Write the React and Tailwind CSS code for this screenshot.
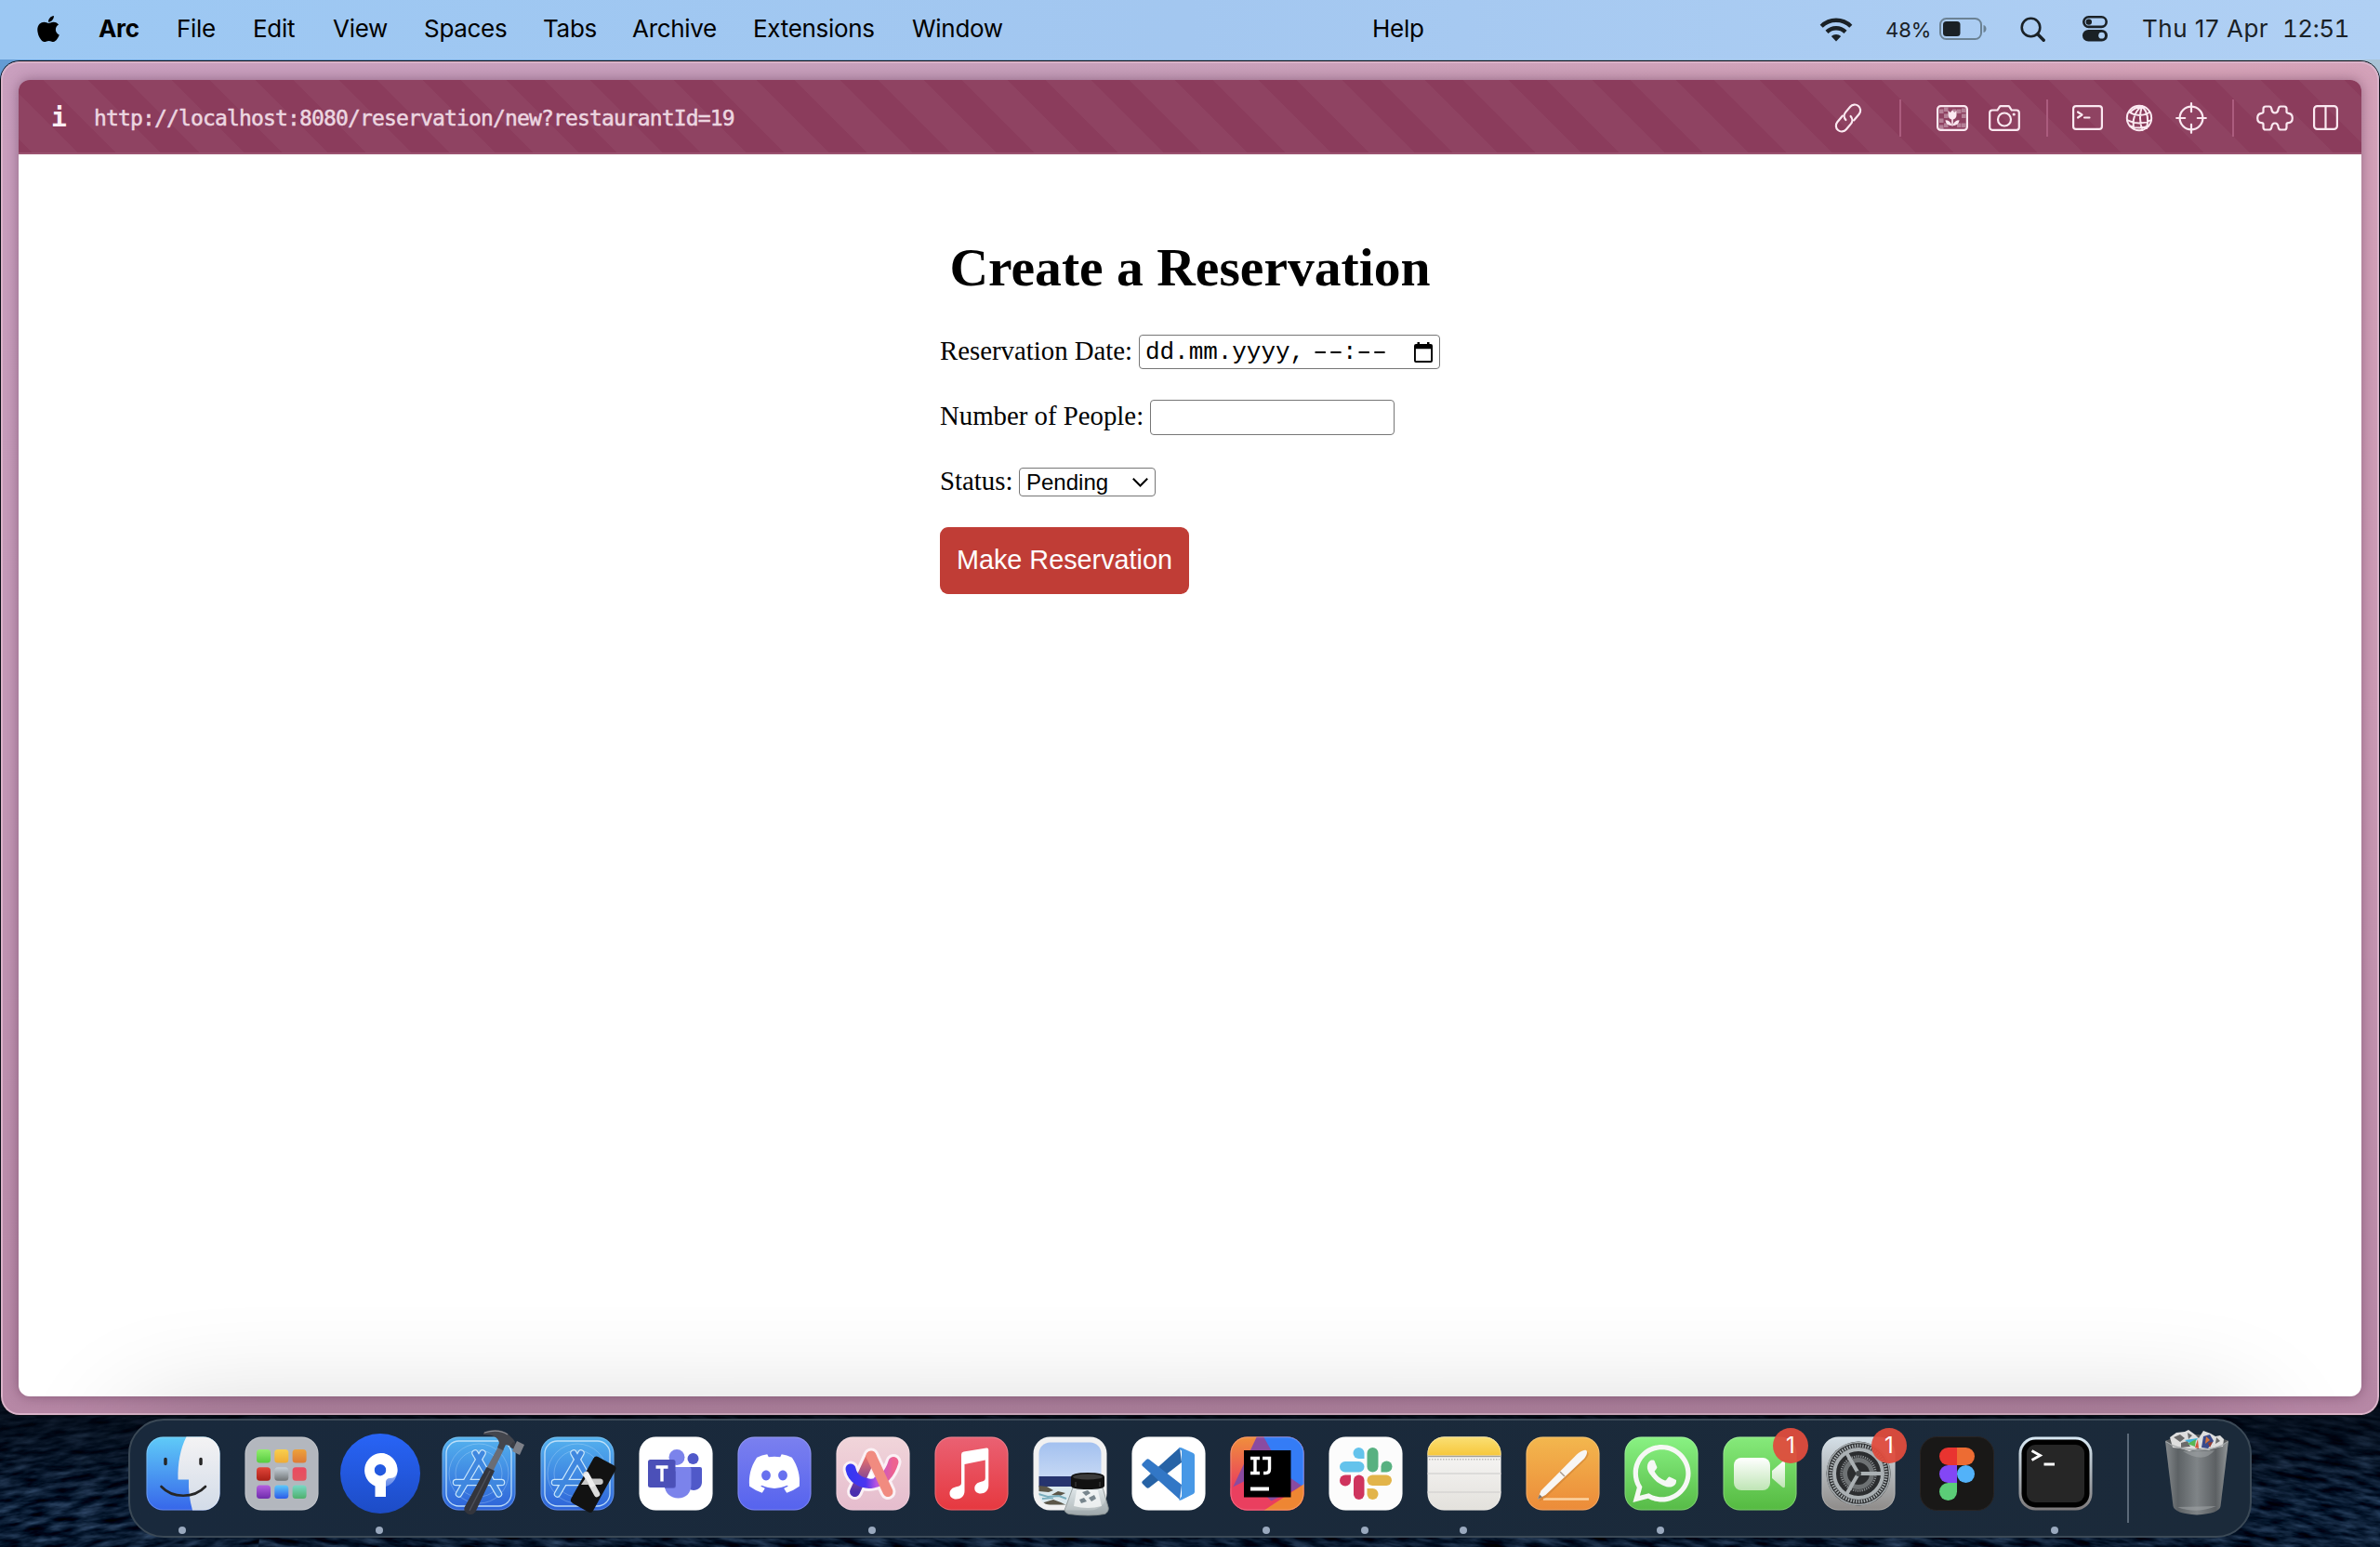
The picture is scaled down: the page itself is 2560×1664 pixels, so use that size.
import React from 'react';
import { FaApple, FaDiscord, FaWhatsapp } from 'react-icons/fa6';

const MENU = [
  ['Arc', 'w-[84px] font-bold'],
  ['File', 'w-[82px]'],
  ['Edit', 'w-[86px]'],
  ['View', 'w-[98px]'],
  ['Spaces', 'w-[128px]'],
  ['Tabs', 'w-[96px]'],
  ['Archive', 'w-[130px]'],
  ['Extensions', 'w-[171px]'],
  ['Window', 'w-[495px]'],
  ['Help', 'w-[100px]'],
];

function MenuBar() {
  return (
    <header className="flex h-16 shrink-0 items-center bg-linear-to-r from-[#9cc8f3] via-[#a3c7f0] to-[#b0d0f4] pb-0.5 text-[26px] leading-8 text-black">
      <FaApple className="ml-[36px] mr-[38px] h-[32px] w-[32px] shrink-0" />
      {MENU.map(([label, cls]) => (
        <span key={label} className={`shrink-0 whitespace-nowrap tracking-[-0.3px] ${cls}`}>{label}</span>
      ))}
      <div className="ml-auto flex items-center text-[#1a2126]">
        <svg className="h-[27px] w-[36px]" viewBox="0 0 36 27" fill="none" stroke="currentColor" strokeWidth="4.4">
          <path d="M2.2 10.2a22.5 22.5 0 0 1 31.6 0" />
          <path d="M8 16.4a14.3 14.3 0 0 1 20 0" />
          <path d="M18 26.5l-5.2-5.4a7.4 7.4 0 0 1 10.4 0z" fill="currentColor" stroke="none" />
        </svg>
        <span className="ml-[35px] w-[58px] whitespace-nowrap pt-0.5 text-[22px]">48%</span>
        <svg className="h-[24px] w-[52px]" viewBox="0 0 52 24">
          <rect x="1" y="1" width="44" height="22" rx="6.5" fill="none" stroke="#6b8294" strokeWidth="2" />
          <rect x="4" y="4" width="18.5" height="16" rx="3.5" fill="currentColor" />
          <path d="M47.5 8c4 1 4 7 0 8z" fill="#6b8294" />
        </svg>
        <svg className="ml-[35px] h-[27px] w-[28px]" viewBox="0 0 28 27" fill="none" stroke="currentColor" strokeLinecap="round">
          <circle cx="11.5" cy="11.5" r="9.8" strokeWidth="2.6" />
          <path d="M18.8 18.8l6.4 6.4" strokeWidth="3.4" />
        </svg>
        <svg className="ml-[39px] h-[28px] w-[28px]" viewBox="0 0 28 28">
          <rect x="1.3" y="1.3" width="24.4" height="10.6" rx="5.3" fill="none" stroke="currentColor" strokeWidth="2.6" />
          <circle cx="6.8" cy="6.6" r="3.2" fill="currentColor" />
          <rect x="0" y="15" width="27" height="12.5" rx="6.25" fill="currentColor" />
          <circle cx="20.6" cy="21.2" r="3.4" fill="#afcff2" />
        </svg>
        <span className="ml-[36px] w-[151px] whitespace-nowrap tracking-[0.5px]">Thu 17 Apr</span>
        <span className="w-[105px] whitespace-nowrap tabular-nums tracking-[-0.5px]">12:51</span>
      </div>
    </header>
  );
}

function Icon({ className, w, h, children }) {
  return (
    <svg className={className} viewBox={`0 0 ${w} ${h}`} width={w} height={h} fill="none" stroke="#fbe9f1" strokeWidth="2.2" strokeLinecap="round" strokeLinejoin="round">
      {children}
    </svg>
  );
}

function Divider({ className }) {
  return <div className={`h-10 w-0.5 shrink-0 bg-[#ab5c7e] ${className}`} />;
}

const CHECKS = [[3, 3], [3, 13], [8, 8], [8, 18], [22, 3], [27, 8], [22, 18], [27, 18], [3, 20], [17, 3], [27, 2], [8, 1]];

function UrlBar() {
  return (
    <div className="flex h-20 shrink-0 items-center border-b-2 border-[#9b5370] bg-[repeating-linear-gradient(45deg,#8b3c5c_0px,#8b3c5c_11.5px,#8f4362_11.5px,#8f4362_46px,#8b3c5c_46px,#8b3c5c_63.55px)] bg-origin-border pt-[3px]">
      <span className="ml-[35px] w-[46px] font-['DejaVu_Sans_Mono',monospace] text-[28px] font-bold leading-8 text-[#fdeef4]">i</span>
      <span className="whitespace-nowrap font-['DejaVu_Sans_Mono',monospace] text-[23px] leading-8 tracking-[-0.85px] text-[#ecd6e0] [-webkit-text-stroke:0.5px_#ecd6e0]">http://localhost:8080/reservation/new?restaurantId=19</span>
      <div className="ml-auto flex items-center">
        <Icon w={32} h={32}>
          <g transform="rotate(-50 16 16)">
            <path d="M15 9.800H6.200a6.200 6.200 0 0 0 0 12.400h8a6.200 6.200 0 0 0 6-5.500" transform="translate(-1 0)" />
            <path d="M17 22.200h8.800a6.200 6.200 0 0 0 0-12.400h-8a6.200 6.200 0 0 0-6 5.500" transform="translate(1 0)" />
          </g>
        </Icon>
        <Divider className="ml-[39px]" />
        <Icon className="ml-[38px]" w={34} h={28}>
          {CHECKS.map(([x, y]) => (
            <rect key={`${x}-${y}`} x={x} y={y + 1.5} width="4.500" height="4.500" fill="#b58197" stroke="none" />
          ))}
          <rect x="1.100" y="1.100" width="31.800" height="25.800" rx="3.500" />
          <path d="M12.500 6l2.300 2L17 5.500 19.200 8l2.300-2v5a4.500 4.500 0 0 1-9 0zM16.200 22C12 22 9.800 19.500 9.500 16.200c3.500 0 6 2 6.700 5zM17.800 22c4.200 0 6.400-2.500 6.700-5.800-3.500 0-6 2-6.700 5z" fill="#fbe9f1" stroke="none" />
          <path d="M17 14v8" strokeWidth="1.600" />
        </Icon>
        <Icon className="ml-[22px]" w={34} h={28}>
          <path d="M4 5.500h5.500l2.300-3.600a1.500 1.500 0 0 1 1.300-.7h8a1.500 1.500 0 0 1 1.300.7l2.300 3.600H30a2.800 2.800 0 0 1 2.800 2.800V24a2.800 2.800 0 0 1-2.800 2.800H4A2.800 2.800 0 0 1 1.200 24V8.300A2.800 2.800 0 0 1 4 5.500z" />
          <circle cx="17" cy="15.500" r="7" />
          <circle cx="27.200" cy="10" r="1.600" fill="#fbe9f1" stroke="none" />
        </Icon>
        <Divider className="ml-[28px]" />
        <Icon className="ml-[26px]" w={33} h={27}>
          <rect x="1.100" y="1.100" width="30.800" height="24.800" rx="3" />
          <path d="M6 7.500l4.500 3L6 13.500M13 13.500h5.500" />
        </Icon>
        <Icon className="ml-[24px]" w={30} h={30}>
          <g strokeWidth="2">
            <circle cx="15" cy="15" r="13.200" />
            <path d="M18 2C10 8 7 18 9.500 27M18 2c-2.500 8-3 17 .5 26M18 2c5.500 6 7.500 15 5 24M4 8.500c7 4.500 16 4.500 22.500 0M2 17c8 4.500 18 4.500 26 0M5 23.500c5 2.500 14 3 20 0M18 2c-5 1-9 3-12 6" />
          </g>
        </Icon>
        <Icon className="ml-[24px]" w={34} h={34}>
          <circle cx="17" cy="17" r="12.400" />
          <path d="M17 1.200v9M17 23.800v9M1.200 17h9M23.800 17h9" />
        </Icon>
        <Divider className="ml-[27px]" />
        <Icon className="ml-[24px]" w={40} h={28}>
          <path d="M10 1.500h4c1.500 0 2 1 2.300 2.500.4 3 1.500 4.500 3.700 4.500s3.300-1.500 3.700-4.500C24 2.500 24.500 1.500 26 1.500h4c1.800 0 2.500 1.200 2.500 2.600v3.200c0 1 .8 1.400 2 1.500 3 .3 4.300 2.400 4.300 5.200s-1.300 4.900-4.300 5.200c-1.200.1-2 .5-2 1.500v3.200c0 1.400-.7 2.600-2.500 2.600h-4c-1.500 0-2-1-2.300-2.500-.4-3-1.500-4.500-3.700-4.500s-3.300 1.500-3.700 4.500c-.3 1.500-.8 2.500-2.300 2.500h-4c-1.800 0-2.500-1.200-2.500-2.600v-3.200c0-1-.8-1.400-2-1.500-3-.3-4.300-2.400-4.300-5.200s1.300-4.900 4.300-5.200c1.200-.1 2-.5 2-1.500V4.100c0-1.400.7-2.600 2.500-2.600z" />
        </Icon>
        <Icon className="ml-[21px] mr-[25px]" w={27} h={27}>
          <rect x="1.100" y="1.100" width="24.800" height="24.800" rx="3.500" />
          <path d="M13.500 1.500v24" />
        </Icon>
      </div>
    </div>
  );
}

function Dashes({ className }) {
  return <span className={`inline-block w-[0.8em] scale-x-[1.6] tracking-[-0.2em] ${className}`}>--</span>;
}

function ReservationForm() {
  return (
    <main className="flex flex-1 justify-center bg-white pt-[89px] font-['Liberation_Serif',serif] text-[28.8px] text-black">
      <div className="flex w-[540px] flex-col items-start pl-px">
        <h1 className="mr-px self-center whitespace-nowrap text-[57.6px] font-bold leading-[66px]">Create a Reservation</h1>
        <div className="mt-[39px] flex h-[37px] w-full items-center whitespace-nowrap">
          <label className="pb-px">Reservation Date:</label>
          <div className="ml-auto mr-px flex h-[37px] w-[324px] items-center rounded-[4px] border border-[#767676] pl-[6px] pr-[7px] font-['Liberation_Mono',monospace] text-[26px] leading-8 tracking-[-0.05px]">
            <span className="whitespace-nowrap pt-px">dd.mm.yyyy,</span>
            <span className="ml-[0.43em] whitespace-nowrap pt-px"><Dashes className="mr-[0.34em]" />:<Dashes className="ml-[0.065em]" /></span>
            <svg className="ml-auto h-[22px] w-[20px]" viewBox="0 0 20 22">
              <path fill="#000" fillRule="evenodd" d="M3.500 0h2.500v2h8V0h2.500v2H18a2 2 0 0 1 2 2v16a2 2 0 0 1-2 2H2a2 2 0 0 1-2-2V4a2 2 0 0 1 2-2h1.500zM1.900 7.200v12.900h16.200V7.200z" />
            </svg>
          </div>
        </div>
        <div className="mt-[33px] flex h-[38px] items-center whitespace-nowrap">
          <label className="w-[226px] pb-[3px]">Number of People:</label>
          <input className="h-[38px] w-[263px] rounded-[4px] border border-[#767676] bg-white" />
        </div>
        <div className="mt-[35px] flex h-[31px] items-center whitespace-nowrap">
          <label className="w-[85px] pb-px">Status:</label>
          <div className="flex h-[31px] w-[147px] items-center justify-between rounded-[4px] border border-[#767676] pl-[7px] pr-[7px] font-['Liberation_Sans',sans-serif] text-[24px] leading-7">
            <span>Pending</span>
            <svg className="h-[10px] w-[17px]" viewBox="0 0 17 10" fill="none" stroke="#000" strokeWidth="2">
              <path d="M.8.800l7.700 7.700L16.200.800" />
            </svg>
          </div>
        </div>
        <button className="mt-[33px] flex h-[72px] w-[268px] items-center justify-center whitespace-nowrap rounded-[9px] bg-[#c03d36] pb-px font-['Liberation_Sans',sans-serif] text-[28.8px] text-white">Make Reservation</button>
      </div>
    </main>
  );
}

function Tile({ fill, children }) {
  return (
    <>
      <rect x="0.500" y="0.500" width="79" height="79" rx="18" fill={fill} />
      {children}
      <rect x="1" y="1" width="78" height="78" rx="17.500" fill="none" stroke="#fff" strokeOpacity=".22" />
    </>
  );
}

function Grad({ id, from, to, x2 = 0, y2 = 1 }) {
  return (
    <linearGradient id={id} x1="0" y1="0" x2={x2} y2={y2}>
      <stop offset="0" stopColor={from} />
      <stop offset="1" stopColor={to} />
    </linearGradient>
  );
}

const PADS = [
  ['#93ee6e', '#56cc40'], ['#f8cf4e', '#efab35'], ['#eda23b', '#dd7a35'],
  ['#e2463a', '#a91f16'], ['#c8d2da', '#707476'], ['#ea4a60', '#e35660'],
  ['#b35fe0', '#6e2cab'], ['#5cc8fa', '#2c5ae8'], ['#78d8c4', '#4fb06c'],
];

function Finder() {
  return (
    <Tile fill="url(#finderBlue)">
      <Grad id="finderBlue" from="#5fcbf8" to="#3666ea" />
      <Grad id="finderWhite" from="#f4f3f4" to="#d2dbe8" />
      <path d="M43.500.500H61.500a18 18 0 0 1 18 18V61.500a18 18 0 0 1-18 18H50c-3-11-4.500-22-4-33H34.500C34 29 37 13 43.500.500z" fill="url(#finderWhite)" />
      <g fill="none" stroke="#262626" strokeLinecap="round">
        <path d="M21 24.500v5M59 24.500v5" strokeWidth="3.500" />
        <path d="M16.500 54c12 13 35 13 47.500 0" strokeWidth="2.600" />
      </g>
    </Tile>
  );
}

function Launchpad() {
  return (
    <Tile fill="#b3b7be">
      {PADS.map(([a, b], i) => (
        <g key={a}>
          <Grad id={`pad${i}`} from={a} to={b} />
          <rect x={13 + (i % 3) * 19.300} y={14 + Math.floor(i / 3) * 19.300} width="15" height="14.500" rx="3.500" fill={`url(#pad${i})`} />
        </g>
      ))}
    </Tile>
  );
}

function Sourcetree() {
  return (
    <>
      <Grad id="src" from="#2864f6" to="#1d4cc6" />
      <Grad id="srcTail" from="#ffffff" to="#5f86e8" />
      <circle cx="40" cy="40" r="43" fill="url(#src)" />
      <path d="M40 18a18.500 18.500 0 0 1 6 36V41a7 7 0 1 0-6-16z" fill="url(#srcTail)" />
      <path fillRule="evenodd" d="M40 18c10.500 0 18.500 8 18.500 18 0 6-3 9-8 9-3 0-4.500 2-4.500 4v16H34.500V53.500A18.500 18.500 0 0 1 40 18zm0 12a6.200 6.200 0 1 0 0 12.400A6.200 6.200 0 0 0 40 30z" fill="#fff" />
    </>
  );
}

function Blueprint() {
  return (
    <Tile fill="url(#xcode)">
      <Grad id="xcode" from="#54b2ee" to="#2d62d8" />
      <g fill="none" stroke="#c9e6fb">
        <rect x="5" y="5" width="70" height="70" rx="13.500" strokeOpacity=".9" strokeWidth="1.300" />
        <circle cx="40" cy="40" r="32" strokeOpacity=".3" />
        <circle cx="40" cy="40" r="25" strokeOpacity=".3" />
        <path d="M44 18L18.500 62" strokeWidth="7.500" strokeLinecap="round" />
        <path d="M36 18l25.500 44" strokeWidth="7.500" strokeLinecap="round" />
        <path d="M15.500 49.500h49" strokeWidth="7.500" strokeLinecap="round" />
        <path d="M44 18L18.500 62M36 18l25.500 44M15.500 49.500h49" stroke="#3f87df" strokeWidth="5.200" strokeLinecap="round" />
      </g>
    </Tile>
  );
}

function Xcode() {
  return (
    <>
      <Blueprint />
      <path d="M61 11l6 3-12 24-7-3z" fill="#6a6d75" />
      <path d="M48.500 33l8.500 4-20 43c-1.500 4-6.500 5-9.500 3s-4-4-2.500-7.500z" fill="#33353c" />
      <path d="M52 37L30 80" stroke="#4c4f58" strokeWidth="1.500" />
      <path d="M45-4c8-4 19-4 26 1l6 6 2 3-2 5-8-2-3 6-6-3 2-5c-1-6-7-9-17-9z" fill="#44464d" />
      <path d="M77 6l5 3-3 6-6-4z" fill="#3b3d44" />
      <path d="M81 5l8 4-5 11-8-4z" fill="#7d8088" />
      <path d="M46-4c10-3 19-2 25 2" stroke="#888b93" strokeWidth="1.200" fill="none" />
    </>
  );
}

function Simulator() {
  return (
    <>
      <Blueprint />
      <g transform="rotate(29 57 51)">
        <rect x="44" y="23" width="27" height="57" rx="4" fill="#121212" />
      </g>
      <path d="M49.500 41L61 62" stroke="#dcdcdc" strokeWidth="6.500" strokeLinecap="round" />
      <path d="M44 52l4.500-6.500H65a3.300 3.300 0 0 1 0 6.500z" fill="#c9c9c9" />
      <path d="M49 40l8 14" stroke="#efefef" strokeWidth="5.500" />
    </>
  );
}

function Teams() {
  return (
    <Tile fill="#fff">
      <circle cx="58.500" cy="24" r="6" fill="#5059c9" />
      <path d="M52 33h14a2 2 0 0 1 2 2V49c0 5.500-4 9-9 9-4 0-7-3-7-7z" fill="#5059c9" />
      <circle cx="41" cy="22.500" r="8.500" fill="#7b83eb" />
      <path d="M30 33h24.500a2 2 0 0 1 2 2V52c0 9-6 14.500-14 14.500S28 61 28 53z" fill="#7b83eb" />
      <path d="M40 33V53a3 3 0 0 1-3 3h-9v-6l12-13z" fill="#4b53bc" opacity=".6" />
      <rect x="10" y="25" width="29.500" height="30" rx="2.500" fill="#4b50b8" />
      <path d="M18.500 33h13M25 33v15.500" stroke="#fff" strokeWidth="3.400" />
    </Tile>
  );
}

function Discord() {
  return (
    <Tile fill="url(#discord)">
      <Grad id="discord" from="#7b80ef" to="#5663ee" />
      <FaDiscord x="10.500" y="10.500" size={59} color="#fff" />
    </Tile>
  );
}

function Arc() {
  const outline = 'M20.500 59.500L38 21 56 59.500';
  const sweep = 'M16 35C18 46 29 52 40 50S58 41 62 27.500';
  return (
    <Tile fill="url(#arcBg)">
      <Grad id="arcBg" from="#f1d5da" to="#e5bccd" />
      <linearGradient id="arcSweep" x1="0" x2="1" y1="0" y2="0">
        <stop offset="0" stopColor="#3737f2" />
        <stop offset=".35" stopColor="#4a35f0" />
        <stop offset=".6" stopColor="#b854e0" />
        <stop offset="1" stopColor="#ee628f" />
      </linearGradient>
      <Grad id="arcLeft" from="#ee7468" to="#4a2fae" />
      <g fill="none" strokeLinecap="round" strokeLinejoin="round">
        <path d={outline} stroke="#fbf1f5" strokeWidth="17" />
        <path d={sweep} stroke="#fbf1f5" strokeWidth="17" />
        <path d="M20.500 59.500L38 21.500" stroke="url(#arcLeft)" strokeWidth="11" />
        <path d={sweep} stroke="url(#arcSweep)" strokeWidth="11" />
        <path d="M38 21L56 59.500" stroke="#f18b80" strokeWidth="11" />
      </g>
      <path d="M38 37.500l-4 7.500c2.500 1 5 1 7.500 0z" fill="#fff" />
    </Tile>
  );
}

function Music() {
  return (
    <Tile fill="url(#music)">
      <Grad id="music" from="#ea6173" to="#e6383f" />
      <path d="M29 19.500q0-2.500 2.500-3L56 12.500q2.300-.4 2.300 2V53c0 5-4 8.500-8.500 8.500-4 0-6.500-2.500-6.500-5.500 0-4 3-6.500 7-7.300 3-.6 4.500-1.200 4.500-3.700V25.500L32.500 30v29c0 5-4 8.500-9 8.500-4 0-7-2.500-7-6 0-4 3-6.500 7-7.300 3-.6 5.500-1 5.500-4.200z" fill="#fff" />
    </Tile>
  );
}

function Preview() {
  return (
    <>
      <Grad id="sky" from="#9dbdef" to="#c6d8f4" />
      <Grad id="glass" from="#dfe6e8" to="#a9b2b4" />
      <rect x="0.500" y="0.500" width="79" height="79" rx="18" fill="#f1f1f1" />
      <clipPath id="photo"><rect x="6.500" y="6.500" width="67" height="67" rx="12" /></clipPath>
      <g clipPath="url(#photo)">
        <path d="M0 0h80v44H0z" fill="url(#sky)" />
        <path d="M0 43h80v12H0z" fill="#26346e" />
        <path d="M0 54h80v26H0z" fill="#dbe9ee" />
        <path d="M6 53l9 1 7 4-5 2-11-1zM12 71l10-3 8 3 6 3H8zM20 63l9 1 6-3-8-2z" fill="#5b5648" />
        <path d="M6 62l10 3 12-1 8 3M10 67l12-1" stroke="#79aebd" strokeWidth="2" fill="none" />
      </g>
      <path d="M43 54h32l6 28c1 4-1 9-4 10q-16 4-38 0c-4-1-6-5-4-9z" fill="url(#glass)" fillOpacity=".92" stroke="#8c9393" transform="matrix(1 0 0 .75 0 14.500)" />
      <path d="M47 58h23l4 17q-15 4-30 0z" fill="#f3f6f6" fillOpacity=".85" />
      <path d="M53 60l6-2 3 3-5 3zM60 66l6-3 2 4-5 3zM50 68l5-2 3 4-6 2z" fill="#78868d" />
      <path d="M41 44q0-5 18-5t18 5v9q0 4-18 4t-18-4z" fill="#111" />
      <ellipse cx="59" cy="43.500" rx="16" ry="3" fill="#3b3b3b" />
      <path d="M46 49v5M72 49v5" stroke="#444" />
    </>
  );
}

function VSCode() {
  return (
    <Tile fill="#fff">
      <path d="M52 12L12 48c-1 1-1 2 0 3l4 4c1 1 2 1 3 .300L54 28z" fill="#2763a6" />
      <path d="M52 68L12 32c-1-1-1-2 0-3l4-4c1-1 2-1 3-.300L54 52z" fill="#3277c6" />
      <path d="M51 68.500q2 .5 3.500-.5l12-6q1.500-.800 1.500-2.500v-39q0-1.700-1.500-2.500l-12-5.500q-2-1-4 .5l3.500 2.500v49z" fill="#4798e6" />
    </Tile>
  );
}

function IntelliJ() {
  return (
    <Tile fill="#e8425f">
      <Grad id="ijA" from="#f0903c" to="#ea3d5d" y2={0.700} />
      <clipPath id="ijClip"><rect x="0.500" y="0.500" width="79" height="79" rx="18" /></clipPath>
      <g clipPath="url(#ijClip)">
        <path d="M0 0h80v80H0z" fill="url(#ijA)" />
        <path d="M29 0L3 55l40 15 37-17V0z" fill="#8a4ba0" />
        <path d="M36 0h44v55L58 40z" fill="#347cf6" />
        <path d="M0 56l20-10 26 25-10 9H0z" fill="#ea3f5f" />
        <path d="M80 51L36 80h44z" fill="#ee8633" />
      </g>
      <rect x="15" y="15" width="50.500" height="50.500" fill="#000" />
      <path d="M22 23.500h10M27 23.500v16M22 39.500h10M35 23.500h7.500V35q0 4.500-4 4.500H36" stroke="#fff" strokeWidth="3.400" fill="none" />
      <rect x="22" y="54.500" width="20" height="4" fill="#fff" />
    </Tile>
  );
}

function Slack() {
  return (
    <Tile fill="#fcfcfc">
      <rect x="12" y="27" width="26.500" height="11.500" rx="5.750" fill="#64c3ec" />
      <path d="M38.500 24h-6A6 6 0 1 1 38.500 18z" fill="#64c3ec" />
      <rect x="41.500" y="12" width="12" height="26.500" rx="6" fill="#58b181" />
      <path d="M56.500 38.500v-6a6 6 0 1 1 6 6z" fill="#58b181" />
      <rect x="41.500" y="41.500" width="26.500" height="11.500" rx="5.750" fill="#e2b44a" />
      <path d="M41.500 56h6a6 6 0 1 1-6 6z" fill="#e2b44a" />
      <rect x="27" y="41.500" width="11.500" height="26.500" rx="5.750" fill="#cf345e" />
      <path d="M24 41.500v6a6 6 0 1 1-6-6z" fill="#cf345e" />
    </Tile>
  );
}

function Notes() {
  return (
    <Tile fill="url(#paper)">
      <Grad id="paper" from="#fbfafa" to="#e3e1dc" />
      <Grad id="pad" from="#fadf74" to="#f7c83c" />
      <path d="M.500 20.500v-2a18 18 0 0 1 18-18h43a18 18 0 0 1 18 18v2z" fill="url(#pad)" />
      <path d="M.500 21.500h79" stroke="#a3a199" strokeWidth="1.600" />
      <path d="M2 24.700h76" stroke="#bdbbb7" strokeWidth="1.500" strokeDasharray="1.500 1.500" />
      <path d="M.500 40h79M.500 60h79" stroke="#d6d5d4" strokeWidth="1.600" />
    </Tile>
  );
}

function Pages() {
  return (
    <Tile fill="url(#pages)">
      <Grad id="pages" from="#f3b74e" to="#ec8b39" />
      <path d="M19 67.500h49" stroke="#fbd3a2" strokeWidth="2.500" />
      <path d="M13 68l4-8L56 19c3-3 7-5 9-4s1 4-2 8L20 64z" fill="#c67a31" opacity=".5" transform="translate(1.500 2)" />
      <path d="M13 67.500l3.500-9L55 19.500c3-3 8-5.500 10-4.500s1 5-2 9L21.500 63z" fill="#f8f6f4" />
      <path d="M37 38l5 5" stroke="#a99a8c" strokeWidth="1.500" />
      <path d="M13 67.500l2-5 3 2.700z" fill="#7b746e" />
    </Tile>
  );
}

function WhatsApp() {
  return (
    <Tile fill="url(#wa)">
      <Grad id="wa" from="#89f283" to="#57bb47" />
      <FaWhatsapp x="5" y="4.500" size={71} color="#f6f8f5" />
    </Tile>
  );
}

function FaceTime() {
  return (
    <Tile fill="url(#ft)">
      <Grad id="ft" from="#86ea7b" to="#55ba41" />
      <Grad id="cam" from="#ffffff" to="#bfe5b5" />
      <rect x="12" y="23" width="39" height="35" rx="8" fill="url(#cam)" />
      <path d="M53 37l11-9.500q3-2 3 1.500v24q0 3.500-3 1.500l-11-9.500z" fill="url(#cam)" />
    </Tile>
  );
}

function Settings() {
  return (
    <Tile fill="url(#set)">
      <Grad id="set" from="#d5e0e8" to="#8e8b89" />
      <circle cx="40" cy="40" r="34.500" fill="#2b2d2f" />
      <g fill="none" stroke="#aab0b3">
        <circle cx="40" cy="40" r="33.500" strokeWidth="1.500" />
        <circle cx="40" cy="40" r="30" strokeWidth="3.500" strokeDasharray="1.500 1.350" />
        <circle cx="40" cy="40" r="26" strokeWidth="4" />
        <circle cx="40" cy="40" r="18.500" strokeWidth="2.500" strokeDasharray="1.200 1.200" stroke="#8a8e91" />
        <circle cx="40" cy="40" r="14.500" strokeWidth="5" stroke="#6e7274" />
        <path d="M40 40h26M40 40L27 17.500M40 40L27 62.500" strokeWidth="4" />
      </g>
      <circle cx="40" cy="40" r="3" fill="#44484a" />
    </Tile>
  );
}

function Figma() {
  return (
    <>
      <rect x="0.500" y="0.500" width="79" height="79" rx="18" fill="#191817" stroke="#282423" />
      <path d="M30.500 12H40v19h-9.500a9.500 9.500 0 0 1 0-19z" fill="#e93430" />
      <path d="M40 12h9.500a9.500 9.500 0 0 1 0 19H40z" fill="#ed6c33" />
      <path d="M30.500 31H40v19h-9.500a9.500 9.500 0 0 1 0-19z" fill="#8347f5" />
      <circle cx="49.500" cy="40.500" r="9.500" fill="#52b2f9" />
      <path d="M30.500 50H40v9.500a9.500 9.500 0 1 1-9.500-9.500z" fill="#5bcd77" />
    </>
  );
}

function TerminalApp() {
  return (
    <>
      <Grad id="term" from="#d9eaf5" to="#7d7a7b" />
      <rect x="0.500" y="0.500" width="79" height="79" rx="18" fill="url(#term)" />
      <rect x="3.500" y="3.500" width="73" height="73" rx="15" fill="#000" />
      <rect x="9" y="9" width="62" height="62" rx="9" fill="#262626" />
      <path d="M14.500 15.500l9 5-9 5" stroke="#fff" strokeWidth="2.800" fill="none" />
      <path d="M27.500 30h11.500" stroke="#fff" strokeWidth="3" />
    </>
  );
}

const APPS = [
  { name: 'Finder', art: Finder, running: true },
  { name: 'Launchpad', art: Launchpad },
  { name: 'Sourcetree', art: Sourcetree, running: true },
  { name: 'Xcode', art: Xcode },
  { name: 'Simulator', art: Simulator },
  { name: 'Teams', art: Teams },
  { name: 'Discord', art: Discord },
  { name: 'Arc', art: Arc, running: true },
  { name: 'Music', art: Music },
  { name: 'Preview', art: Preview },
  { name: 'VSCode', art: VSCode },
  { name: 'IntelliJ', art: IntelliJ, running: true },
  { name: 'Slack', art: Slack, running: true },
  { name: 'Notes', art: Notes, running: true },
  { name: 'Pages', art: Pages },
  { name: 'WhatsApp', art: WhatsApp, running: true },
  { name: 'FaceTime', art: FaceTime, badge: 1 },
  { name: 'Settings', art: Settings, badge: 1 },
  { name: 'Figma', art: Figma },
  { name: 'Terminal', art: TerminalApp, running: true },
];

function Trash() {
  return (
    <svg className="ml-[36px] mt-[9px] h-[94px] w-[74px]" viewBox="0 0 74 94">
      <defs>
        <linearGradient id="bin" x1="0" x2="1" y1="0" y2="0">
          <stop offset="0" stopColor="#85898c" />
          <stop offset=".2" stopColor="#5d6265" />
          <stop offset=".5" stopColor="#7f8487" />
          <stop offset=".8" stopColor="#5c6063" />
          <stop offset="1" stopColor="#94989a" />
        </linearGradient>
      </defs>
      <path d="M3 13q34-13 68 0l-8.500 70q-1 8-25.500 9.500Q13 91 11.500 83z" fill="url(#bin)" />
      <path d="M3 13q34-14 68 0-5 8-34 9.500Q8 21 3 13z" fill="#55585a" />
      <path d="M8 9l7-5 9-1 4-2 7 5 4 4 5-8 8 3 5 3 5-1 4 4-1 8-9 1-6 3-12-2-9 3-9-3-9-1z" fill="#dedede" />
      <path d="M12 9l7-3 5 4-5 4zM27 4l5 3-4 4zM58 9l4 4-5 3zM20 15l7-2 3 6-10 1z" fill="#6a6a6a" />
      <path d="M24 12l14-2-5 7z" fill="#3fb2dd" /><path d="M27 16l9-5-1 8z" fill="#58b752" />
      <path d="M35 20l3-9 1 10z" fill="#d3573b" /><path d="M44 8l7-2 4 7-6 8-7-1z" fill="#394a8b" />
      <path d="M47 8l4 4-5 4z" fill="#d6743a" /><path d="M49 15l5-1-3 6z" fill="#963b2e" />
      <path d="M3.500 13.500Q15 22 37 22.500T70.500 13.500" fill="none" stroke="#a2a6a8" strokeWidth="1.500" />
      <path d="M22 24q22 14 34-1-14 2-34 1zM16 84q20 8 42-1" fill="#a5a9ab" fillOpacity=".5" />
    </svg>
  );
}

function Dock() {
  return (
    <footer className="relative mt-1 ml-[138px] flex h-[128px] w-[2284px] shrink-0 rounded-[38px] border-2 border-[#3b4956] bg-linear-to-r from-[#19293c] to-[#1b2a3a] pl-[4px] shadow-[0_0_130px_-10px_rgba(0,0,0,0.24)]">
      {APPS.map(({ name, art: Art, running, badge }) => (
        <div key={name} className="relative flex w-[106px] shrink-0 flex-col items-center pt-[17px]">
          <svg className="h-20 w-20 overflow-visible" viewBox="0 0 80 80"><Art /></svg>
          {running && <span className="mr-0.5 mt-[17px] h-2 w-2 rounded-full bg-[#9aa9be]" />}
          {badge && (
            <span className="absolute left-[67px] top-[8px] flex h-[38px] w-[38px] items-center justify-center rounded-full bg-[#df4c3d]/95 text-[24px] leading-none text-white">{badge}</span>
          )}
        </div>
      ))}
      <div className="ml-[24px] mt-[14px] h-24 w-0.5 bg-[#5b6978]" />
      <Trash />
    </footer>
  );
}

function Ocean() {
  return (
    <svg className="absolute inset-x-0 bottom-0 h-[190px] w-full" viewBox="0 0 2560 190" preserveAspectRatio="none">
      <filter id="waves" x="0" y="0" width="100%" height="100%" colorInterpolationFilters="sRGB">
        <feTurbulence type="fractalNoise" baseFrequency="0.035 0.16" numOctaves="4" seed="7" />
        <feColorMatrix values="0.42 0 0 0 -0.17  0.5 0 0 0 -0.14  0.6 0 0 0 -0.1  0 0 0 0 1" />
      </filter>
      <linearGradient id="depth" x1="0" x2="0" y1="0" y2="1">
        <stop offset=".2" stopColor="#01060f" stopOpacity=".75" />
        <stop offset=".75" stopColor="#01060f" stopOpacity="0" />
      </linearGradient>
      <rect width="2560" height="190" fill="#05172c" />
      <g transform="rotate(-8 0 190)">
        <rect x="-60" y="-60" width="460" height="340" filter="url(#waves)" />
      </g>
      <g transform="rotate(8 2560 190)">
        <rect x="300" y="-60" width="2360" height="640" filter="url(#waves)" />
      </g>
      <rect width="2560" height="190" fill="url(#depth)" />
    </svg>
  );
}

export default function App() {
  return (
    <div className="relative flex h-[1664px] w-[2560px] flex-col overflow-hidden bg-linear-to-r from-[#639bd4] to-[#a9c3d6] font-['Inter',sans-serif]">
      <Ocean />
      <MenuBar />
      <section className="relative mx-px mt-0.5 flex h-[1456px] shrink-0 flex-col rounded-[20px] border-2 border-[#dcb5cb]/90 bg-[linear-gradient(100deg,#c99fbe_0%,#c69fba_40%,#d6a3b8_85%,#cf9fba_100%)] px-[17px] pb-[18px] pt-[18px] shadow-[0_0_0_1px_#0a0f16]">
        <div className="absolute inset-0 rounded-[18px] bg-linear-to-b from-[#b687a5]/0 via-[#b687a5]/30 to-[#b687a5]" />
        <div className="relative flex flex-1 flex-col overflow-hidden rounded-[12px] shadow-[0_0_14px_rgba(60,20,50,0.4)]">
          <UrlBar />
          <ReservationForm />
        </div>
      </section>
      <Dock />
    </div>
  );
}
